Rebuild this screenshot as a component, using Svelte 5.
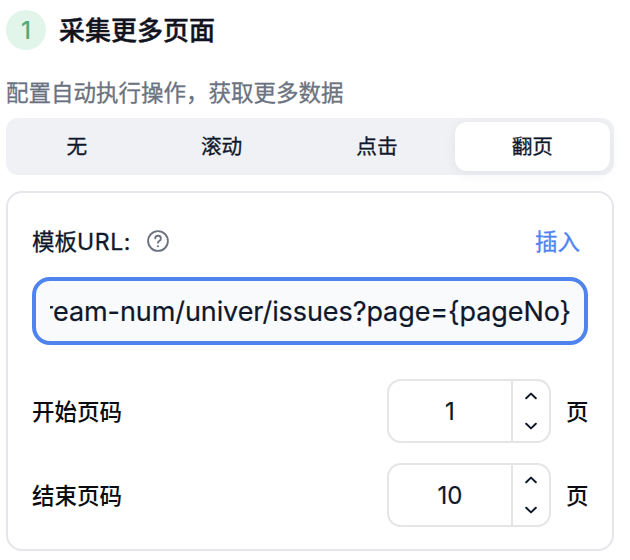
<script>
  const tabs = ['无', '滚动', '点击', '翻页'];
  let active = $state('翻页');
  let rows = $state([
    { label: '开始页码', value: 1 },
    { label: '结束页码', value: 10 }
  ]);
</script>

<main>
  <header>
    <span class="step">1</span>
    <h1>采集更多页面</h1>
  </header>
  <p class="desc">配置自动执行操作，获取更多数据</p>

  <div class="tabs">
    {#each tabs as tab}
      <button class="tab" class:single={tab.length === 1} class:active={active === tab} onclick={() => (active = tab)}>{tab}</button>
    {/each}
  </div>

  <section class="card">
    <div class="template">
      <span class="template-label">模板<span class="latin">URL:</span></span>
      <svg class="help" viewBox="0 0 24 24" fill="none" stroke="currentColor" stroke-width="2" stroke-linecap="round" stroke-linejoin="round">
        <circle cx="12" cy="12" r="10.8" />
        <path d="M8.9 9.2a3.1 3.1 0 0 1 6.2 .4c0 1.7-1.5 2.2-2.3 2.8-.6.4-.8.8-.8 1.5" />
        <path d="M12 17.7h.01" stroke-width="2.4" />
      </svg>
      <button class="insert">插入</button>
    </div>

    <div class="url"><div class="clip"><span>ream-num/univer/issues?page=&#123;pageNo&#125;</span></div></div>

    {#each rows as row}
      <div class="row">
        <span class="label">{row.label}</span>
        <div class="number">
          <span class="value">{row.value}</span>
          <div class="steppers">
            <button aria-label="增加" onclick={() => row.value++}>
              <svg viewBox="0 0 12 8"><path d="M1.2 6.2 6 1.6l4.8 4.6" /></svg>
            </button>
            <button aria-label="减少" onclick={() => row.value--}>
              <svg viewBox="0 0 12 8"><path d="M1.2 1.8 6 6.4l4.8-4.6" /></svg>
            </button>
          </div>
        </div>
        <span class="unit">页</span>
      </div>
    {/each}
  </section>
</main>

<style>
  :global(body) {
    background: #fff;
  }
  main {
    box-sizing: border-box;
    width: 630px;
    height: 560px;
    padding: 10px 16px 0 6px;
    overflow: hidden;
    font-family: Inter, 'Noto Sans CJK SC', sans-serif;
    color: #0f172a;
  }
  button {
    border: 0;
    padding: 0;
    background: none;
    font: inherit;
    color: inherit;
  }
  header {
    display: flex;
    align-items: center;
    height: 40px;
    gap: 13px;
  }
  .step {
    width: 40px;
    height: 40px;
    border-radius: 50%;
    background: #e1f5eb;
    color: #4fab7b;
    font-size: 24px;
    font-weight: 500;
    line-height: 42px;
    text-align: center;
  }
  h1 {
    margin: 0;
    color: #11131f;
    font-size: 26px;
    font-weight: 500;
    line-height: 40px;
    padding-top: 2px;
    -webkit-text-stroke: 0.4px;
  }
  .desc {
    margin: 26px 0 0;
    height: 42px;
    color: #6b7280;
    font-size: 22.5px;
    line-height: 34px;
    white-space: nowrap;
    -webkit-text-stroke: 0.3px;
  }
  .tabs {
    display: flex;
    box-sizing: border-box;
    width: 608px;
    height: 57px;
    padding: 4px;
    border-radius: 12px;
    background: #f0f1f5;
  }
  .tab {
    flex: 155.5 1 0;
    border-radius: 12px;
    font-size: 20.7px;
    line-height: 50px;
    -webkit-text-stroke: 0.3px;
  }
  .tab.single {
    flex-grow: 134;
  }
  .tab.active {
    background: #fff;
    box-shadow: 0 3px 14px rgba(15, 15, 35, 0.06);
  }
  .card {
    box-sizing: border-box;
    width: 608px;
    height: 360px;
    margin-top: 16px;
    padding: 32px 24px 0;
    border: 2px solid #e5e6eb;
    border-radius: 16px;
  }
  .template {
    display: flex;
    align-items: center;
    height: 34px;
    font-size: 22.5px;
    line-height: 32px;
    -webkit-text-stroke: 0.3px;
  }
  .latin {
    font-size: 23px;
    letter-spacing: 0.6px;
  }
  .help {
    width: 22px;
    height: 22px;
    margin-left: 16px;
    margin-bottom: 2px;
    color: #6b7280;
  }
  .insert {
    margin-left: auto;
    margin-right: 8px;
    color: #4f83f1;
    -webkit-text-stroke: 0.3px;
  }
  .url {
    display: flex;
    align-items: center;
    box-sizing: border-box;
    height: 68px;
    margin: 18px 0 34px;
    padding: 2px 13px 0 14px;
    border: 4px solid #4f83ee;
    border-radius: 18px;
    background: #f9fafc;
  }
  .clip {
    display: flex;
    flex: 1;
    justify-content: flex-end;
    overflow: hidden;
    font-size: 27px;
    letter-spacing: -0.08px;
    line-height: 40px;
    white-space: nowrap;
    -webkit-text-stroke: 0.2px;
  }
  .row {
    display: flex;
    align-items: center;
    height: 64px;
    margin-bottom: 20px;
    font-size: 22.5px;
    font-weight: 500;
    color: #0b0c10;
  }
  .label,
  .unit {
    padding-bottom: 2px;
  }
  .number {
    display: flex;
    box-sizing: border-box;
    width: 164px;
    height: 64px;
    margin-left: auto;
    border: 2px solid #e5e5e5;
    border-radius: 14px;
    color: #0f172a;
    font-size: 24px;
    font-weight: 400;
  }
  .value {
    flex: 1;
    text-align: center;
    line-height: 62px;
    -webkit-text-stroke: 0.2px;
  }
  .steppers {
    display: flex;
    flex-direction: column;
    justify-content: center;
    width: 36px;
    border-left: 2px solid #e5e5e5;
  }
  .steppers button {
    display: flex;
    align-items: center;
    justify-content: center;
    height: 30px;
  }
  .steppers svg {
    width: 12px;
    height: 8px;
    fill: none;
    stroke: #0f172a;
    stroke-width: 2;
    stroke-linecap: round;
    stroke-linejoin: round;
  }
  .unit {
    width: 22px;
    margin-left: 15px;
  }
</style>
